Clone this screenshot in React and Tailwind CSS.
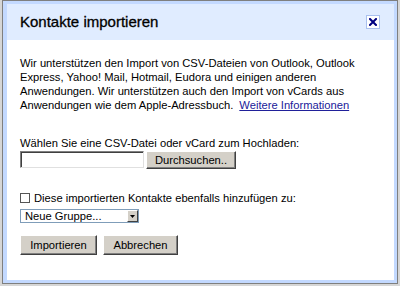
import React from "react";

export default function App() {
  const font = { fontFamily: '"Liberation Sans", Arial, sans-serif' };
  return (
    <div className="w-[400px] h-[286px] bg-[#d6d6d6] overflow-hidden" style={font}>
      <div className="ml-[2px] w-[396px] h-[284px] border border-[#7f7f7f] bg-[#c3d9ff] pt-[3px] pl-[4px] pr-[3px] pb-[3px] flex flex-col">
        <div className="h-[36px] bg-[#e0ecff] flex items-center justify-between pl-[13px] pr-[14px] shrink-0">
          <span className="text-[15px] leading-[18px] text-black [-webkit-text-stroke:0.3px_black]">Kontakte importieren</span>
          <div className="w-[14px] h-[14px] bg-white border border-[#a9c0ef] flex items-center justify-center">
            <svg width="8" height="8" viewBox="0 0 8 8">
              <path d="M1 1 L7 7 M7 1 L1 7" stroke="#000080" strokeWidth="2" strokeLinecap="square" />
            </svg>
          </div>
        </div>
        <div className="flex-1 bg-white pl-[13px] pt-[16px] text-[11.2px] leading-[14px] text-black">
          <p className="whitespace-nowrap">
            Wir unterstützen den Import von CSV-Dateien von Outlook, Outlook
            <br />
            Express, Yahoo! Mail, Hotmail, Eudora und einigen anderen
            <br />
            Anwendungen. Wir unterstützen auch den Import von vCards aus
            <br />
            Anwendungen wie dem Apple-Adressbuch.
            <span className="text-[#20209a] underline ml-[6px]">Weitere Informationen</span>
          </p>
          <div className="mt-[24px]">Wählen Sie eine CSV-Datei oder vCard zum Hochladen:</div>
          <div className="flex mt-[1px] gap-[2px]">
            <div className="w-[124px] h-[17px] bg-white border border-t-[#808080] border-l-[#808080] border-b-[#e0e0e0] border-r-[#e0e0e0] shadow-[inset_1px_1px_0_#404040]" />
            <div className="h-[18px] w-[90px] bg-[#d4d0c8] border border-t-white border-l-white border-b-[#404040] border-r-[#404040] shadow-[inset_-1px_-1px_0_#808080] flex items-center justify-center">
              Durchsuchen..
            </div>
          </div>
          <div className="flex items-center mt-[22px] h-[14px]">
            <div className="w-[10px] h-[10px] border border-[#555] bg-white mr-[4px]" />
            <span>Diese importierten Kontakte ebenfalls hinzufügen zu:</span>
          </div>
          <div className="mt-[4px] w-[119px] h-[14px] border border-[#7f9db9] bg-white flex items-center justify-between">
            <span className="pl-[4px] leading-[12px]">Neue Gruppe...</span>
            <div className="w-[11px] h-[12px] bg-[#d4d0c8] border border-t-white border-l-white border-b-[#404040] border-r-[#404040] flex items-center justify-center">
              <svg width="5" height="3" viewBox="0 0 5 3"><path d="M0 0 H5 L2.5 3 Z" fill="#000" /></svg>
            </div>
          </div>
          <div className="flex gap-[6px] mt-[12px]">
            <div className="w-[77px] h-[20px] bg-[#d4d0c8] border border-t-white border-l-white border-b-[#404040] border-r-[#404040] shadow-[inset_-1px_-1px_0_#808080] flex items-center justify-center">
              Importieren
            </div>
            <div className="w-[75px] h-[20px] bg-[#d4d0c8] border border-t-white border-l-white border-b-[#404040] border-r-[#404040] shadow-[inset_-1px_-1px_0_#808080] flex items-center justify-center">
              Abbrechen
            </div>
          </div>
        </div>
      </div>
    </div>
  );
}
